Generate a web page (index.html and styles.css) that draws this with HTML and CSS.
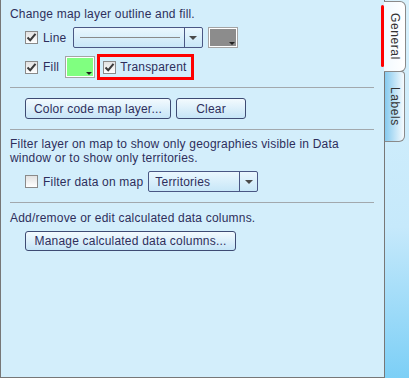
FILE: index.html
```html
<!DOCTYPE html>
<html>
<head>
<meta charset="utf-8">
<link rel="stylesheet" href="styles.css">
</head>
<body>
<div class="app">
  <div class="panel">
    <p class="text first">Change map layer outline and fill.</p>
    <div class="row row-line">
      <label class="check"><span class="cb on"><svg viewBox="0 0 13 13" width="13" height="13"><path d="M2.5 6.5 L5.2 9.2 L10.5 2.8" fill="none" stroke="#3a3a3a" stroke-width="2"/></svg></span><span>Line</span></label>
      <div class="combo combo-line"><span class="combo-val"><span class="linesample"></span></span><span class="combo-btn"><span class="tri"></span></span></div>
      <span class="swatch gray"><span class="mini"></span></span>
    </div>
    <div class="row row-fill">
      <label class="check"><span class="cb on"><svg viewBox="0 0 13 13" width="13" height="13"><path d="M2.5 6.5 L5.2 9.2 L10.5 2.8" fill="none" stroke="#3a3a3a" stroke-width="2"/></svg></span><span>Fill</span></label>
      <span class="swatch green"><span class="mini"></span></span>
      <label class="check redbox"><span class="cb on"><svg viewBox="0 0 13 13" width="13" height="13"><path d="M2.5 6.5 L5.2 9.2 L10.5 2.8" fill="none" stroke="#3a3a3a" stroke-width="2"/></svg></span><span>Transparent</span></label>
    </div>
    <hr class="sep sep1">
    <div class="row row-btns">
      <button class="btn btn-color">Color code map layer...</button>
      <button class="btn btn-clear">Clear</button>
    </div>
    <hr class="sep sep2">
    <p class="text para">Filter layer on map to show only geographies visible in Data<br>window or to show only territories.</p>
    <div class="row row-filter">
      <label class="check"><span class="cb"></span><span>Filter data on map</span></label>
      <div class="combo combo-terr"><span class="combo-val">Territories</span><span class="combo-btn"><span class="tri"></span></span></div>
    </div>
    <hr class="sep sep3">
    <p class="text para2">Add/remove or edit calculated data columns.</p>
    <div class="row row-manage">
      <button class="btn btn-manage">Manage calculated data columns...</button>
    </div>
  </div>
  <div class="tabs">
    <span class="mark"></span>
    <div class="tab tab-general"><span>General</span></div>
    <div class="tab tab-labels"><span>Labels</span></div>
  </div>
</div>
</body>
</html>
```
FILE: styles.css
```css
html, body {
  margin: 0;
  padding: 0;
}
body {
  width: 409px;
  height: 378px;
  overflow: hidden;
  font-family: "Liberation Sans", Arial, sans-serif;
  font-size: 12px;
  letter-spacing: 0.2px;
  color: #2e2e5c;
  background: #d3eefb;
}
.app {
  display: flex;
  width: 409px;
  height: 378px;
}
.panel {
  box-sizing: border-box;
  width: 385px;
  height: 378px;
  background: #d3eefb;
  border-left: 1px solid #777;
  border-right: 1px solid #777;
  border-bottom: 1px solid #777;
  padding: 7px 0 0 9px;
}
.text {
  margin: 0;
  line-height: 14px;
  white-space: nowrap;
}
.row {
  display: flex;
  align-items: center;
  padding-left: 15px;
}
.row-line {
  height: 21px;
  margin-top: 6px;
}
.row-fill {
  height: 26px;
  margin-top: 6px;
}
.check {
  display: flex;
  align-items: center;
  gap: 5px;
}
.cb {
  box-sizing: border-box;
  width: 13px;
  height: 13px;
  border: 1px solid #8a8a8a;
  background: linear-gradient(#e2e2e2, #ffffff);
  display: flex;
  align-items: center;
  justify-content: center;
  flex: none;
}
.cb svg {
  display: block;
  margin: -1px;
}
.row-line .check span:last-child,
.row-fill > .check:first-child span:last-child {
  margin-right: 6px;
}
.combo {
  box-sizing: border-box;
  display: flex;
  height: 21px;
  border: 1px solid #4a5784;
  border-radius: 2px;
  background: linear-gradient(#eaf7fe, #c8e7f8);
}
.combo-line {
  width: 130px;
}
.combo-val {
  flex: 1;
  display: flex;
  align-items: center;
  padding-left: 6px;
}
.linesample {
  display: block;
  width: 100px;
  height: 1px;
  background: #8a8a8a;
}
.combo-btn {
  width: 17px;
  border-left: 1px solid #4a5784;
  display: flex;
  align-items: center;
  justify-content: center;
}
.tri {
  width: 0;
  height: 0;
  border-left: 4px solid transparent;
  border-right: 4px solid transparent;
  border-top: 4px solid #4a4a4a;
}
.swatch {
  box-sizing: border-box;
  position: relative;
  width: 30px;
  height: 21px;
  border: 1px solid #a4a4a4;
  padding: 1px;
  background-clip: content-box;
  box-shadow: inset 0 0 0 1px #fff;
}
.swatch.gray {
  margin-left: 5px;
  background-color: #8c8c8c;
}
.swatch.green {
  height: 22px;
  background-color: #80ff80;
}
.mini {
  position: absolute;
  right: 2px;
  bottom: 2px;
  width: 0;
  height: 0;
  border-left: 3px solid transparent;
  border-right: 3px solid transparent;
  border-top: 3px solid #222;
}
.redbox {
  box-sizing: border-box;
  height: 26px;
  margin-left: 2px;
  border: 3px solid #ff0000;
  padding: 0 4px 0 3px;
  gap: 4px;
}
.sep {
  margin: 0;
  border: 0;
  height: 1px;
  width: 364px;
  background: #a2a8ad;
}
.sep1 {
  margin-top: 7px;
}
.row-btns {
  margin-top: 10px;
  gap: 5px;
}
.btn {
  box-sizing: border-box;
  height: 21px;
  border: 1px solid #3e4b73;
  border-radius: 3px;
  background: linear-gradient(#f3fafe, #c6e5f7);
  font-family: inherit;
  font-size: 12px;
  letter-spacing: 0.2px;
  color: #2e2e5c;
  padding: 0;
  margin: 0;
}
.btn-color {
  width: 146px;
}
.btn-clear {
  width: 70px;
}
.sep2 {
  margin-top: 10px;
}
.para {
  margin-top: 7px;
}
.row-filter {
  margin-top: 6px;
  height: 21px;
}
.row-filter .check span:last-child {
  margin-right: 5px;
}
.combo-terr {
  width: 110px;
}
.combo-terr .combo-val {
  padding-left: 6px;
}
.sep3 {
  margin-top: 10px;
}
.para2 {
  margin-top: 8px;
}
.row-manage {
  margin-top: 6px;
}
.btn-manage {
  width: 211px;
  height: 20px;
}
.tabs {
  position: relative;
  flex: 1;
  height: 378px;
  padding-top: 1px;
  box-sizing: border-box;
  background: linear-gradient(#d8f1fc 0%, #c6e9fb 60%, #7ccff6 100%);
}
.tab {
  box-sizing: border-box;
  position: relative;
  margin-left: -1px;
  border: 1px solid #8a8a8a;
  border-left: 0;
  display: flex;
  align-items: center;
  justify-content: center;
  color: #333;
  font-size: 12px;
}
.tab span {
  writing-mode: vertical-rl;
  letter-spacing: 0.6px;
}
.tab-general {
  width: 22px;
  height: 71px;
  border-radius: 0 6px 6px 0;
  background: linear-gradient(90deg, #f2faff, #ffffff);
  z-index: 1;
}
.tab-labels {
  width: 21px;
  height: 71px;
  margin-top: -1px;
  border-radius: 0 4px 6px 0;
  background: linear-gradient(90deg, #86caef, #f6fbfe);
  border-left: 1px solid #777;
}
.mark {
  position: absolute;
  left: -4px;
  top: 5px;
  width: 3px;
  height: 62px;
  border-radius: 2px;
  background: #ff0000;
  z-index: 2;
}
```
